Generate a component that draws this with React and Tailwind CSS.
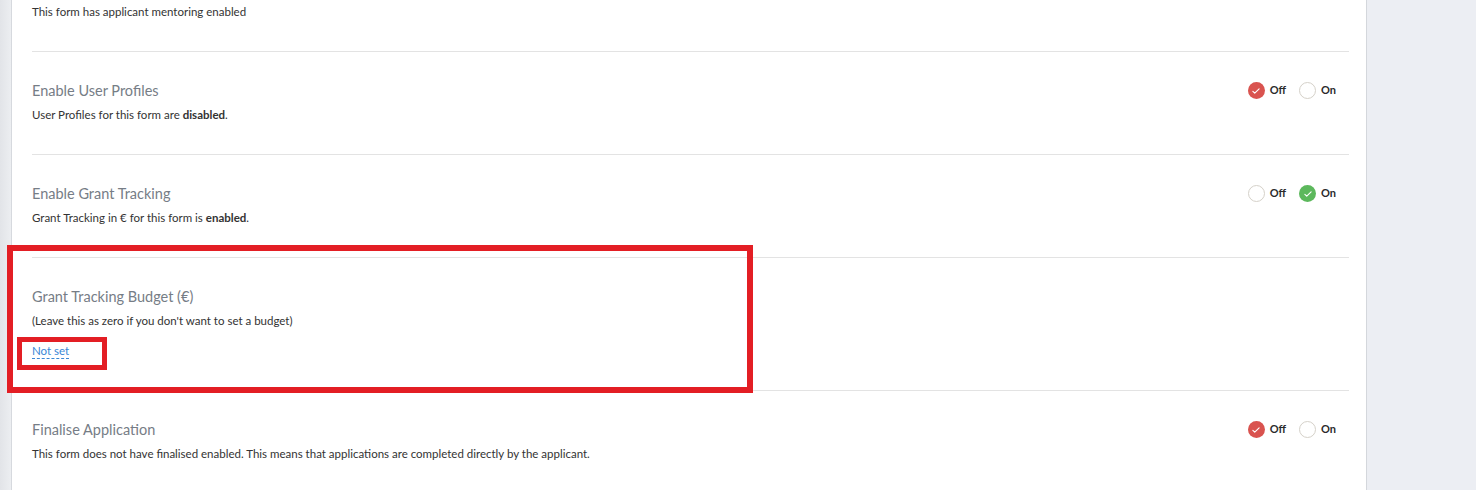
import React from 'react'

const font = { fontFamily: 'Lato, "Noto Sans", sans-serif' }

const Check = () => (
  <svg viewBox="0 0 16 16" className="h-[10px] w-[10px]" fill="none" stroke="white" strokeWidth="1.8" strokeLinecap="round" strokeLinejoin="round">
    <path d="M3 8.5l3 3 7-7" />
  </svg>
)

const Radio = ({ label, checked, color }) => (
  <label className="flex items-center gap-[5px]">
    {checked ? (
      <span className={`flex h-[17px] w-[17px] items-center justify-center rounded-full ${color}`}>
        <Check />
      </span>
    ) : (
      <span className="h-[17px] w-[17px] rounded-full border border-[#d5d1c9] bg-white" />
    )}
    <span className="text-[11px] font-bold text-[#2b2b2b]">{label}</span>
  </label>
)

const Toggle = ({ value }) => (
  <div className="flex items-center gap-[13px] pr-[13px]">
    <Radio label="Off" checked={value === 'off'} color="bg-[#d9534f]" />
    <Radio label="On" checked={value === 'on'} color="bg-[#5cb85c]" />
  </div>
)

const Row = ({ title, children, toggle, extra, last, tight }) => (
  <div
    className={`flex items-start justify-between pt-[28px] ${last ? '' : 'border-b border-[#e3e3e3]'} ${tight ? 'pb-[29px]' : 'pb-[30px]'}`}
  >
    <div>
      <h3 className="text-[14.5px] leading-[22px] text-[#767d86]">{title}</h3>
      <p className="mt-[4px] text-[11.5px] leading-[18px] text-[#333]">{children}</p>
      {extra}
    </div>
    {toggle && <div className="mt-[2px]"><Toggle value={toggle} /></div>}
  </div>
)

export default function App() {
  return (
    <div className="relative flex h-[490px] w-full overflow-hidden bg-white" style={font}>
      <div className="w-[12px] border-r border-[#d6d9de] bg-gradient-to-r from-[#e2e4e8] to-[#eceef1]" />
      <main className="flex-1 pl-[20px] pr-[17px]">
        <div className="border-b border-[#e3e3e3] pt-[3px] pb-[30px]">
          <p className="text-[11.5px] leading-[18px] text-[#333]">This form has applicant mentoring enabled</p>
        </div>
        <Row title="Enable User Profiles" toggle="off">
          User Profiles for this form are <b>disabled</b>.
        </Row>
        <Row title="Enable Grant Tracking" toggle="on">
          Grant Tracking in € for this form is <b>enabled</b>.
        </Row>
        <Row
          tight
          title="Grant Tracking Budget (€)"
          extra={
            <a className="mt-[13px] inline-block border-b border-dashed border-[#3a87d6] text-[11.5px] leading-[15px] text-[#3a87d6]">
              Not set
            </a>
          }
        >
          (Leave this as zero if you don't want to set a budget)
        </Row>
        <Row title="Finalise Application" toggle="off" last>
          This form does not have finalised enabled. This means that applications are completed directly by the applicant.
        </Row>
      </main>
      <aside className="w-[110px] border-l border-[#d4d7dc] bg-[#eceef3]" />

      <div className="pointer-events-none absolute left-[7px] top-[245px] h-[148px] w-[746px] border-[6px] border-[#e31e24]" />
      <div className="pointer-events-none absolute left-[17px] top-[337px] h-[33px] w-[90px] border-[5px] border-[#e31e24]" />
    </div>
  )
}
